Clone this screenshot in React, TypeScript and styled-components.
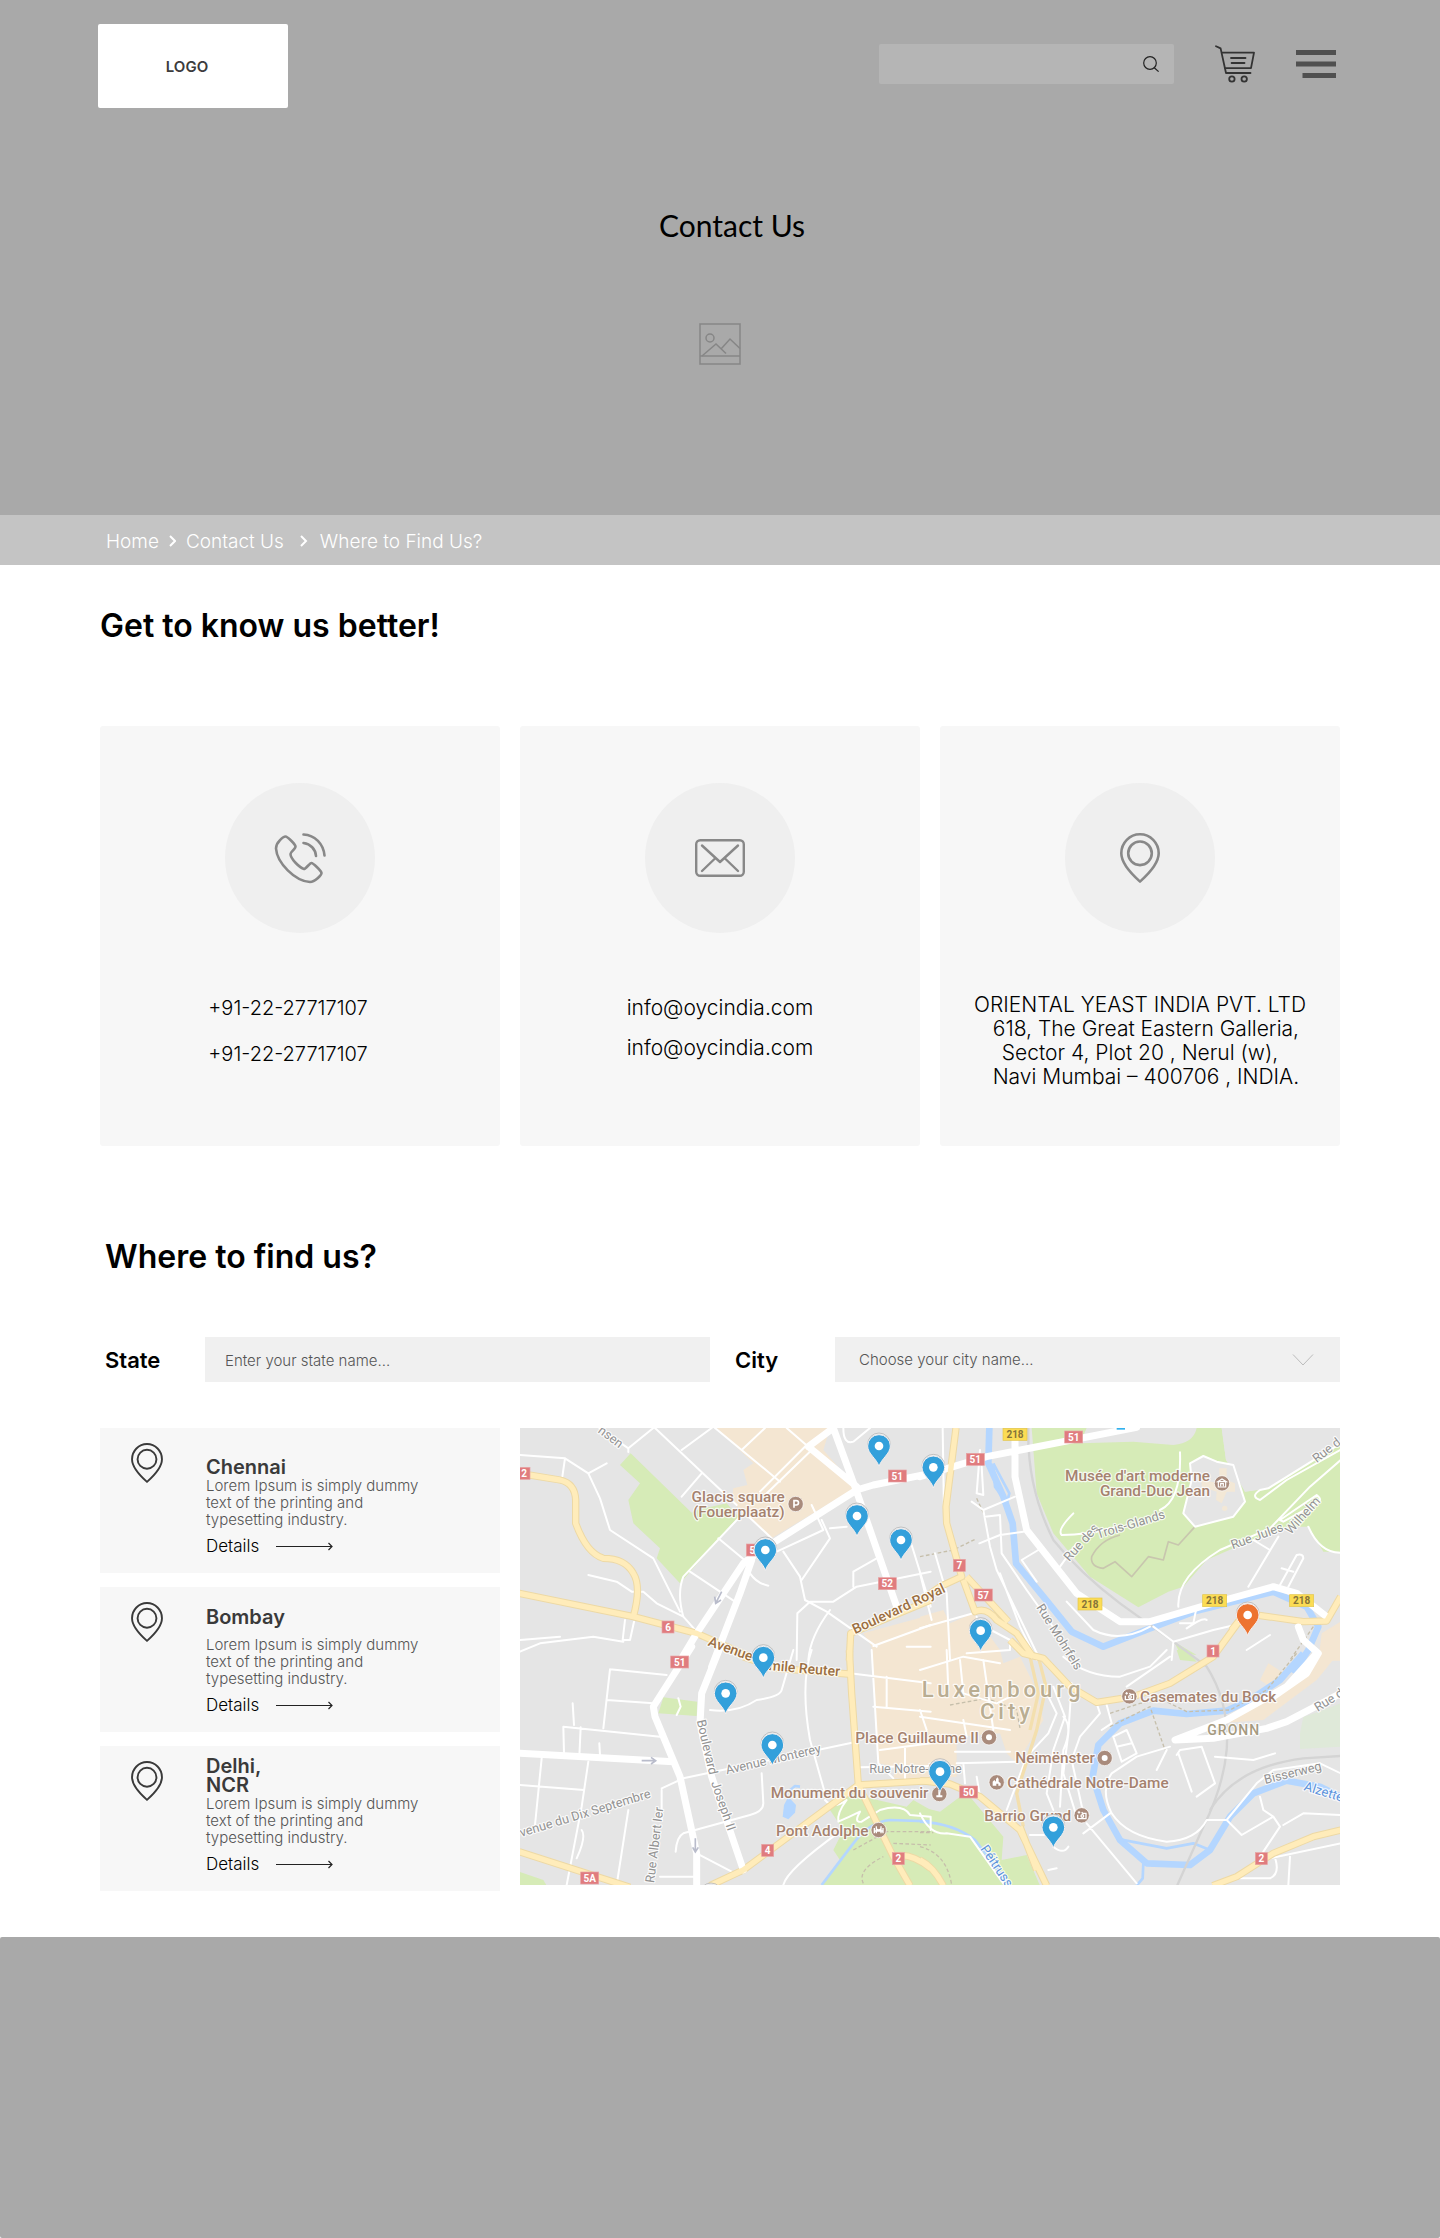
import React from "react";
import styled, { createGlobalStyle } from "styled-components";

const GlobalStyle = createGlobalStyle`
  *, *::before, *::after { box-sizing: border-box; }
  body {
    margin: 0;
    background: #fff;
    color: #000;
    font-family: Inter, "Liberation Sans", sans-serif;
  }
  h1, h2, h3, p { margin: 0; }
  button { border: 0; padding: 0; background: none; cursor: pointer; }
  a { color: inherit; text-decoration: none; }
  svg { display: block; }
`;

/* ---------- Hero ---------- */

const Hero = styled.header`
  background: #a9a9a9;
  padding: 24px 104px 150px 98px;
`;

const TopBar = styled.div`
  display: flex;
  justify-content: space-between;
  align-items: flex-start;
`;

const Logo = styled.a`
  display: flex;
  align-items: center;
  justify-content: center;
  width: 190px;
  height: 84px;
  padding-right: 12px;
  border-radius: 2px;
  background: #fff;
  color: #3c3c3c;
  font-size: 15px;
  font-weight: 600;
`;

const Tools = styled.div`
  display: flex;
  align-items: center;
  gap: 41px;
  height: 80px;
`;

const SearchBox = styled.form`
  display: flex;
  align-items: center;
  width: 295px;
  height: 40px;
  padding: 0 15px;
  border-radius: 2px;
  background: #b5b5b5;
`;

const SearchInput = styled.input`
  flex: 1;
  min-width: 0;
  border: 0;
  outline: 0;
  background: transparent;
  font: inherit;
`;

const HeroBody = styled.div`
  display: flex;
  flex-direction: column;
  align-items: center;
  gap: 80px;
  margin-top: 99px;
  padding-left: 6px;
`;

const PageTitle = styled.h1`
  padding-left: 24px;
  font-family: Lato, "Liberation Sans", sans-serif;
  font-size: 30px;
  font-weight: 400;
  line-height: 36px;
`;

const Breadcrumb = styled.nav`
  display: flex;
  align-items: center;
  gap: 10px;
  height: 50px;
  padding: 2px 106px 0;
  background: #c4c4c4;
  color: #fff;
  font-size: 19px;
  font-weight: 300;
`;

/* ---------- Contact ---------- */

const Main = styled.main`
  padding: 43px 100px 46px;
`;

const SectionTitle = styled.h2`
  font-size: 32px;
  font-weight: 600;
  line-height: 36px;
`;

const ContactGrid = styled.div`
  display: grid;
  grid-template-columns: repeat(3, 1fr);
  gap: 20px;
  margin: 82px 0 93px;
`;

const ContactCard = styled.article`
  display: flex;
  flex-direction: column;
  align-items: center;
  gap: 60px;
  min-height: 420px;
  padding: 57px 20px 40px;
  border-radius: 3px;
  background: #f7f7f7;
`;

const IconDisc = styled.div`
  display: flex;
  align-items: center;
  justify-content: center;
  width: 150px;
  height: 150px;
  border-radius: 50%;
  background: #efefef;
  color: #888;
`;

const ContactLines = styled.div<{ $gap: number; $size: number; $inset?: number }>`
  display: flex;
  flex-direction: column;
  align-items: center;
  gap: ${(p) => p.$gap}px;
  padding: 3px ${(p) => p.$inset ?? 0}px 0 0;
  font-size: ${(p) => p.$size}px;
  font-weight: 300;
  line-height: 24px;
`;

const Address = styled.address`
  font-size: 21px;
  font-style: normal;
  font-weight: 300;
  line-height: 24px;
  text-align: center;
  white-space: pre;
`;

/* ---------- Finder ---------- */

const FinderTop = styled.div`
  padding-left: 5px;
`;

const Filters = styled.form`
  display: grid;
  grid-template-columns: repeat(2, 1fr);
  gap: 25px;
  margin: 62px 0 46px;
`;

const Field = styled.div`
  display: flex;
  align-items: center;
`;

const FieldLabel = styled.label`
  flex: 0 0 100px;
  font-size: 22px;
  font-weight: 600;
`;

const StateInput = styled.input`
  flex: 1;
  min-width: 0;
  height: 45px;
  padding: 2px 20px 0;
  border: 0;
  border-radius: 0;
  background: #f0f0f0;
  color: #555;
  font-family: inherit;
  font-size: 15px;
  font-weight: 300;
  &::placeholder { color: #555; opacity: 1; }
`;

const SelectWrap = styled.div`
  position: relative;
  flex: 1;
  min-width: 0;
  svg {
    position: absolute;
    right: 26px;
    top: 17px;
    pointer-events: none;
  }
`;

const CitySelect = styled.select`
  appearance: none;
  width: 100%;
  height: 45px;
  padding: 0 24px;
  border: 0;
  border-radius: 0;
  background: #f0f0f0;
  color: #555;
  font-family: inherit;
  font-size: 15px;
  font-weight: 300;
`;

const FinderGrid = styled.div`
  display: grid;
  grid-template-columns: repeat(3, 1fr);
  align-items: start;
  gap: 20px;
`;

const LocationList = styled.div`
  display: grid;
  gap: 14px;
`;

const LocationCard = styled.article`
  display: grid;
  grid-template-columns: 75px 1fr;
  min-height: 145px;
  padding: 11px 20px 16px 31px;
  background: #f7f7f7;
`;

const PinSlot = styled.div`
  padding-top: 4px;
  color: #3a3a3a;
`;

const LocationName = styled.h3<{ $align: "center" | "end" }>`
  display: flex;
  align-items: ${(p) => p.$align};
  height: 38px;
  color: #3a3a3a;
  font-size: 20px;
  font-weight: 600;
  line-height: 19px;
  white-space: pre-line;
`;

const LocationText = styled.p`
  max-width: 230px;
  color: #555;
  font-size: 15px;
  font-weight: 300;
  line-height: 17px;
`;

const DetailsLink = styled.a`
  display: inline-flex;
  align-items: center;
  gap: 17px;
  margin-top: 8px;
  font-size: 17px;
  font-weight: 300;
  line-height: 20px;
`;

const MapFrame = styled.div`
  grid-column: span 2;
  svg { width: 100%; height: auto; }
`;

const Footer = styled.footer`
  height: 301px;
  border-radius: 2px;
  background: #a9a9a9;
`;

/* ---------- Icons ---------- */

const SearchIcon = () => (
  <svg width="16" height="16" viewBox="0 0 16 16" fill="none" stroke="#222" strokeWidth="1.2">
    <circle cx="7" cy="7" r="6.3" />
    <path d="M11 11.5 15.6 15.6" />
  </svg>
);

const CartIcon = () => (
  <svg width="40" height="38" viewBox="0 0 40 38" fill="none" stroke="#333" strokeWidth="1.8" strokeLinecap="round" strokeLinejoin="round">
    <path d="M1 1.2 5.6 3.4 11 28H35.500" />
    <path d="M7.400 7.600H39L36 23.200H10.500" />
    <path d="M16 13H30.500M16.600 18H29.500" />
    <circle cx="16.900" cy="34" r="2.700" />
    <circle cx="29.200" cy="34" r="2.700" />
  </svg>
);

const MenuIcon = () => (
  <svg width="40" height="28" viewBox="0 0 40 28" fill="#505050">
    <path d="M0 0H40V5H0ZM0 11.500H40V16.500H0ZM6.500 23H40V28H6.500Z" />
  </svg>
);

const PictureIcon = () => (
  <svg width="42" height="42" viewBox="0 0 42 42" fill="none" stroke="#868686" strokeWidth="1.500">
    <path d="M1 1H41V41H1ZM1 33H41" />
    <circle cx="11" cy="15" r="4" />
    <path d="M3 33 17 21 27 30.500M22 26 31 16 41 25.500" />
  </svg>
);

const CrumbArrow = ({ wide }: { wide?: boolean }) => (
  <svg width={wide ? 16 : 7} height="12" viewBox={wide ? "-6 0 16 12" : "0 0 7 12"} fill="none" stroke="#fff" strokeWidth="2" aria-hidden="true">
    <path d="M1 1 6 6 1 11" />
  </svg>
);

const PhoneIcon = () => (
  <svg width="52" height="52" viewBox="0 0 52 52" fill="none" stroke="currentColor" strokeWidth="2.600" strokeLinecap="round" strokeLinejoin="round">
    <path d="M11.500 4.500C9.500 4.500 2 10 2 16.500C3 31 21 49 36 50C41 50 47.500 43 47.500 41C47.500 39 39 31 37.500 31C35.500 31 32 37 30 37C26 36 16.500 27 16.500 22C16.500 20 21.500 17 21.500 14.500C21.500 12.500 13.500 4.500 11.500 4.500Z" />
    <path d="M29.500 11C36.500 12 41.500 17 42 24M29.500 2.500C41 3 49.500 12 50.500 23.500" />
  </svg>
);

const MailIcon = () => (
  <svg width="50" height="38" viewBox="0 0 50 38" fill="none" stroke="currentColor" strokeWidth="2.400" strokeLinecap="round" strokeLinejoin="round">
    <rect x="1.200" y="1.200" width="47.600" height="35.600" rx="4" />
    <path d="M7 6.500 25 23 43 6.500M7 32 20.500 19M43 32 29.500 19" />
  </svg>
);

const PinIcon = ({ width, height, stroke }: { width: number; height: number; stroke: number }) => (
  <svg width={width} height={height} viewBox="0 0 40 50" fill="none" stroke="currentColor" strokeWidth={stroke} strokeLinejoin="round">
    <path d="M20 48.600C12 41.500 1.300 31 1.300 20.300A18.700 19 0 0 1 38.700 20.300C38.700 31 28 41.500 20 48.600Z" />
    <circle cx="20" cy="20.300" r="11.800" />
  </svg>
);

const LongArrow = () => (
  <svg width="57" height="9" viewBox="0 0 57 9" fill="none" stroke="#222" strokeWidth="1.200" aria-hidden="true">
    <path d="M0 4.500H56M52.500 1 56 4.500 52.500 8" />
  </svg>
);

/* ---------- Map ---------- */

/* The map is drawn in four sheets; each sheet has its own origin. */
const SHEETS = {
  nw: "translate(-30 -24)",
  ne: "translate(1200 -24)",
  sw: "translate(-30 666)",
  se: "translate(1200 666)",
};
type Sheet = keyof typeof SHEETS;
type Shape = [Sheet, string];

const SAND: Shape[] = [
  ["nw", "M620 24H960L940 90 1010 170 1040 200 785 355 665 245 670 205 712 195 700 150 730 130Z"],
  ["nw", "M1060 640 1262 585V722H1085V680Z"],
  ["ne", "M0 590 70 570 90 610 160 580 240 690V720H0Z"],
  ["sw", "M1085 0H1262V390L1150 385 1155 350 1105 340Z"],
  ["se", "M0 0H240L250 40 300 20 345 110 370 210 290 340 260 310 240 250 110 260V380L0 390Z"],
  ["ne", "M1205 640 1262 605V722H1195Z"],
  ["se", "M1195 0H1262L1215 60 1190 90 1030 210 920 218 1100 120Z"],
  ["se", "M1045 40 1085 65 1050 110 1020 90Z"],
];

const PARKS: Shape[] = [
  ["nw", "M362 100 330 135 390 190 355 240 370 310 450 385 440 415 510 490 685 290 650 250 560 270 545 278Z"],
  ["ne", "M335 24H500L480 70 640 65 760 75Q820 70 830 24H905L918 120 975 215 1045 205 1262 70V395H1210L1165 320 1100 320 950 380 860 420 790 500 745 515 655 562 510 470 400 340 350 220Z"],
  ["sw", "M460 142 562 155 560 198 445 190Z"],
  ["sw", "M960 480 1010 440H1060L1190 470 1210 450 1262 480V707H935L990 630 970 600 1000 540Z"],
  ["se", "M0 470 60 485 120 440 150 440 250 560 245 630 320 615 360 707H0Z"],
  ["sw", "M28 665 100 690 110 707H28Z"],
  ["ne", "M762 665 830 705 780 700Z"],
  ["se", "M770 0H800L830 35 780 30Z"],
];

const PALE_PARKS: Shape[] = [["se", "M1150 200Q1190 190 1262 160V290L1140 297V250Z"]];

const BLOCKS: Shape[] = [
  ["ne", "M850 108 890 125 940 135 975 245 940 290 825 320 790 280 815 180 810 130Z"],
  ["ne", "M905 24H1262V70L1045 205 975 215 940 135 918 120Z"],
];

const RIVERS: Shape[] = [
  ["ne", "M208 24 205 130 250 230 278 310 288 430 370 530 455 635 550 680 690 625 830 572 1060 515 1160 560 1195 620 1165 690 1120 760"],
  ["se", "M1150 10 1080 90 990 150 920 182 800 192 700 182 600 220 535 285 518 380 550 480 600 570 680 640 810 645 870 600 930 500 1000 430 1100 392 1200 410 1262 440"],
];

const STREAMS: Shape[] = [
  ["ne", "M220 130 225 200 260 250 268 220 220 130"],
  ["sw", "M935 705 1030 580Q1080 515 1140 510L1262 514"],
  ["se", "M0 515Q100 520 165 570L270 707"],
  ["se", "M600 568 740 595 820 580 870 600M670 640 668 685 650 707"],
  ["sw", "M835 425 855 408 870 410"],
];

const PONDS: Shape[] = [["sw", "M835 440 858 465 855 488 835 508 818 500 822 465Z"]];

const MINOR_ROADS: Shape[] = [
  ["nw", "M30 105 165 115 235 160 270 235 300 330 430 415 510 575M165 115 157 170M235 160 290 130M268 24 355 85 430 24M355 85V96M435 24 600 180 680 255M515 90 605 24M575 160 515 230M695 90 765 24M615 24 810 185M695 270 785 355M625 355 710 425"],
  ["nw", "M685 295 520 470Q500 520 520 590L560 635M540 455 675 545M235 465 320 485 365 515H400L440 550 520 590M30 660 150 650M30 695 90 670 250 650 340 665M345 600 338 660H360L372 605"],
  ["nw", "M830 24 900 85M750 215 890 75M765 225 905 90M1000 24Q1000 75 1030 65L1080 24M800 395 940 330 905 255M935 300 960 355 875 480M820 395 870 470 885 540 950 575 1100 680M860 720 862 580 900 545 970 545 1040 500 1262 455M895 720Q900 650 960 570M1100 415 1030 455V500M1205 375 1262 560M720 460Q740 490 775 497M960 325 1010 320M1090 678 1262 615M1190 680H1262"],
  ["ne", "M68 24 72 280M180 90 170 220 190 225 185 140M155 245 190 270 285 230M195 290 240 285 245 400 320 510 470 720M190 270 210 380 230 450 360 720M240 460 300 620 350 720M178 370 240 345 310 335M355 390 305 420 350 485M0 460 35 600M45 400 80 520 90 720M0 625 160 580"],
  ["ne", "M420 440 470 370M460 280Q410 330 425 345 500 345 590 320M780 97Q785 240 720 270M850 108 890 125 940 135 975 245 940 290 825 320 790 280 815 180 810 130ZM1260 90 1100 180 1020 240Q990 230 1020 210L1045 205 1262 70M1262 120 1170 200 1050 325 900 390Q770 470 775 560M1165 320Q1200 400 1262 398M1080 300 1190 225Q1210 240 1190 250L1090 305ZM1075 350 985 500M1000 360 1050 390M1080 495 1130 405Q1150 400 1150 415L1105 500M1085 445 1120 455"],
  ["ne", "M440 545 520 630Q600 670 690 620M700 620 760 665 755 720M780 610 820 610 830 560M800 625Q850 590 860 600M760 665 880 630 1010 600M980 690 1050 645M170 590 175 610 270 660V690L140 700"],
  ["sw", "M300 58 470 75M300 58 280 235M290 150 430 160M188 160 192 225M160 230 450 260M160 230 162 310M212 232 208 320M268 280 270 315M95 325 75 525M235 335 215 470 170 705M30 405 222 420M355 480 320 705M215 540Q230 560 200 625M455 420 455 510M455 415 520 385 1040 275M600 180Q680 190 740 150 810 140 815 120L850 0M905 0Q870 100 900 270L945 430M755 370 760 460Q760 485 720 495L520 550Q500 560 497 605M560 610 675 670M820 705Q830 660 990 545M450 680H550M505 145 512 170 500 195M1020 70 1262 100M1085 0 1105 340 1150 385M1130 80V170M1090 170 1262 185M1110 300 1262 280M1185 290V390M1050 352 1262 348M1230 180 1250 240"],
  ["se", "M80 0 85 120M0 60 130 20 240 40M120 30 130 130 230 160 290 130M0 200 270 240M130 210 140 260M190 30 220 240M105 305H270M110 340 290 335M130 340 135 400M170 380 180 440M370 110 410 190 385 250 320 320 260 480M400 110 435 200 400 300 380 430 400 480M430 200Q460 230 430 300L420 470M455 100 445 250 430 370 470 500M530 160 540 190 480 260 455 330 490 490"],
  ["se", "M430 20Q500 80 600 80L690 50 740 0M620 110 750 20M560 165 575 220 545 240M750 290 650 320 575 370Q540 420 575 490 620 560 740 575 830 570 860 510L920 510 1010 400 1060 360 1200 340 1262 370M490 550 570 490M500 520 650 700M580 260 620 240 650 310 605 335ZM590 290 635 280M770 315 780 300 845 290 885 400 830 440M775 310 815 425M740 300 710 360M885 320 1000 330 1065 310M920 510 965 555 1060 500 1030 480 1020 440M1060 500 1080 530 1030 605M1090 525 1150 490 1262 495M1060 610Q1085 670 1050 685H960M1050 625 1262 580M1110 620 1105 705M330 555H380M400 590Q430 615 445 590M385 660 410 655M0 490Q30 555 80 550L150 560 250 700"],
  ["sw", "M945 450Q970 480 1010 450 980 490 985 515 1020 500 1050 485 1030 520 1055 515L1110 480Q1180 460 1200 495L1262 500V540"],
];

const YELLOW_ROADS: Shape[] = [
  ["nw", "M28 160 150 180Q195 190 197 240V310Q230 400 280 415 345 415 370 460 395 500 370 590M28 520 370 590 560 640 730 715M1018 722 1022 640 1262 540"],
  ["sw", "M700 20 800 55 1015 72M1018 0 1025 130 1045 405 1262 392M600 707 700 660 1045 405 1150 620 1200 707M1150 620Q1200 605 1262 655M28 605 360 712"],
  ["se", "M0 392 90 402 180 440 300 540 380 707M300 530 350 660M0 630Q40 650 70 707M270 -30 310 10 370 25 450 110 530 157 640 140 750 100 880 20 960 -90M878 707 950 680 1060 610 1180 560 1262 540"],
  ["ne", "M108 24 78 260 80 310 125 470 60 500 0 542M130 480 165 575Q200 560 230 600L290 640 340 712M140 470 265 605M935 630 975 580 1150 605 1220 603 1262 530"],
];

const NARROW_YELLOW: Shape[] = [["se", "M355 20 378 110 350 240 290 430 310 530M330 20 355 130 330 240"]];

const MAIN_ROADS: Shape[] = [
  ["nw", "M500 740 560 640 700 430 740 400 1040 210 1090 195 1262 160M605 740 690 520 725 420M970 24 1040 215 1160 560M895 80 1040 200M895 80 970 24"],
  ["ne", "M0 170 200 110 650 22M285 60V170L320 330 470 520 600 605H690L860 555 1060 500 1130 520 1220 590"],
  ["sw", "M545 -10 430 170 435 200 510 380 560 610V707M635 -20 575 130 570 220 605 380 700 660M28 310 490 335"],
  ["ne", "M1135 620 1150 660 1195 700 1160 760 1060 830"],
  ["se", "M1190 10 1100 110 920 210 765 270 880 265 1040 235 1100 215 1262 130"],
];

const RAILS: Shape[] = [
  ["ne", "M325 24Q320 200 400 360 480 460 600 550L760 665 860 740Q930 850 920 990 910 1100 850 1220L770 1400"],
  ["se", "M870 480Q950 350 1150 325L1262 318"],
];

const TRAILS: Shape[] = [
  ["ne", "M0 410 100 390 165 358M170 235 200 300M1180 620 1110 720"],
  ["se", "M570 190 660 160 730 150 800 185 930 180 1040 120 1130 10M570 230 690 170 735 300M90 165 200 145 290 180 300 235M0 548H40M0 590Q80 610 95 705"],
  ["sw", "M1030 600 1130 545H1262M1060 700Q1040 660 1120 620M1150 580 1262 585"],
];

const FOOTPATHS: Shape[] = [
  ["ne", "M825 320 775 375 745 365 730 420 685 410 635 470 585 425 550 445Q510 440 515 410 540 360 600 345"],
];

const Layer = ({ shapes, ...paint }: { shapes: Shape[] } & React.SVGProps<SVGGElement>) => (
  <g {...paint}>
    {shapes.map(([sheet, d], i) => (
      <path key={i} transform={SHEETS[sheet]} d={d} />
    ))}
  </g>
);

type LabelKind = "place" | "road" | "avenue" | "city" | "district" | "water";
const MapText = styled.text<{ $kind: LabelKind }>`
  font-family: Roboto, "Liberation Sans", sans-serif;
  font-size: ${(p) => ({ place: 46, road: 38, avenue: 42, city: 66, district: 42, water: 39 })[p.$kind]}px;
  fill: ${(p) =>
    ({ place: "#a5826f", road: "#929292", avenue: "#9b6f42", city: "#b9ad92", district: "#a59a80", water: "#5c93dc" })[p.$kind]};
  letter-spacing: ${(p) => ({ place: 0, road: 0, avenue: 0, city: 12, district: 3, water: 0 })[p.$kind]}px;
  font-weight: ${(p) => (p.$kind === "road" || p.$kind === "water" ? 400 : 500)};
  stroke: #fff;
  stroke-opacity: 0.8;
  stroke-width: 7px;
  stroke-linejoin: round;
  paint-order: stroke;
`;

interface Label {
  at: [Sheet, number, number];
  text: string;
  kind: LabelKind;
  turn?: number;
  anchor?: "start" | "middle" | "end";
}

const LABELS: Label[] = [
  { at: ["nw", 824, 245], text: "Glacis square", kind: "place", anchor: "end" },
  { at: ["nw", 824, 291], text: "(Fouerplaatz)", kind: "place", anchor: "end" },
  { at: ["ne", 870, 182], text: "Musée d'art moderne", kind: "place", anchor: "end" },
  { at: ["ne", 870, 229], text: "Grand-Duc Jean", kind: "place", anchor: "end" },
  { at: ["sw", 1036, 280], text: "Place Guillaume II", kind: "place" },
  { at: ["sw", 782, 445], text: "Monument du souvenir", kind: "place" },
  { at: ["sw", 798, 557], text: "Pont Adolphe", kind: "place" },
  { at: ["se", 660, 156], text: "Casemates du Bock", kind: "place" },
  { at: ["se", 286, 340], text: "Neimënster", kind: "place" },
  { at: ["se", 262, 415], text: "Cathédrale Notre-Dame", kind: "place" },
  { at: ["se", 193, 514], text: "Barrio Grund", kind: "place" },
  { at: ["se", 5, 140], text: "Luxembourg", kind: "city" },
  { at: ["se", 180, 208], text: "City", kind: "city" },
  { at: ["se", 862, 254], text: "GRONN", kind: "district" },
  { at: ["nw", 1035, 643], text: "Boulevard Royal", kind: "avenue", turn: -25 },
  { at: ["nw", 592, 676], text: "Avenue", kind: "avenue", turn: 20 },
  { at: ["sw", 775, 60], text: "mile Reuter", kind: "avenue", turn: 5 },
  { at: ["nw", 262, 36], text: "nsen", kind: "road", turn: 37 },
  { at: ["ne", 448, 426], text: "Rue des", kind: "road", turn: -48 },
  { at: ["ne", 534, 356], text: "Trois-Glands", kind: "road", turn: -17 },
  { at: ["ne", 938, 388], text: "Rue Jules", kind: "road", turn: -20 },
  { at: ["ne", 1112, 345], text: "Wilhelm", kind: "road", turn: -48 },
  { at: ["ne", 1190, 130], text: "Rue d", kind: "road", turn: -38 },
  { at: ["ne", 348, 562], text: "Rue Mohrfels", kind: "road", turn: 58 },
  { at: ["se", 1193, 186], text: "Rue d", kind: "road", turn: -32 },
  { at: ["se", 1036, 402], text: "Bisserweg", kind: "road", turn: -14 },
  { at: ["se", 1150, 420], text: "Alzette", kind: "water", turn: 17 },
  { at: ["se", 180, 596], text: "Péitruss", kind: "water", turn: 56 },
  { at: ["sw", 560, 212], text: "Boulevard", kind: "road", turn: 77 },
  { at: ["sw", 603, 398], text: "Joseph II", kind: "road", turn: 71 },
  { at: ["sw", 650, 373], text: "Avenue Monterey", kind: "road", turn: -13 },
  { at: ["sw", 1078, 368], text: "Rue Notre-Dame", kind: "road" },
  { at: ["sw", 34, 561], text: "venue du Dix Septembre", kind: "road", turn: -17 },
  { at: ["sw", 432, 700], text: "Rue Albert Ier", kind: "road", turn: -83 },
];

interface Shield {
  at: [Sheet, number, number];
  text: string;
  tone?: "yellow";
}

const SHIELDS: Shield[] = [
  { at: ["nw", 42, 160], text: "2" },
  { at: ["nw", 1162, 168], text: "51" },
  { at: ["nw", 736, 390], text: "51" },
  { at: ["nw", 1132, 491], text: "52" },
  { at: ["nw", 474, 621], text: "6" },
  { at: ["sw", 509, 36], text: "51" },
  { at: ["ne", 166, 118], text: "51" },
  { at: ["ne", 461, 51], text: "51" },
  { at: ["ne", 285, 43], text: "218", tone: "yellow" },
  { at: ["ne", 510, 552], text: "218", tone: "yellow" },
  { at: ["ne", 884, 542], text: "218", tone: "yellow" },
  { at: ["ne", 1145, 542], text: "218", tone: "yellow" },
  { at: ["ne", 118, 436], text: "7" },
  { at: ["ne", 190, 525], text: "57" },
  { at: ["ne", 879, 693], text: "1" },
  { at: ["se", 146, 426], text: "50" },
  { at: ["se", 1024, 626], text: "2" },
  { at: ["sw", 773, 601], text: "4" },
  { at: ["sw", 1165, 626], text: "2" },
  { at: ["sw", 239, 684], text: "5A" },
];

const ShieldText = styled.text<{ $yellow: boolean }>`
  font-family: Roboto, "Liberation Sans", sans-serif;
  font-size: 30px;
  font-weight: 700;
  text-anchor: middle;
  fill: ${(p) => (p.$yellow ? "#85743a" : "#fff")};
`;

type PoiGlyph = "dot" | "parking" | "camera" | "museum" | "church" | "monument" | "bridge";
const POIS: [Sheet, number, number, PoiGlyph][] = [
  ["nw", 857, 252, "parking"],
  ["ne", 906, 190, "museum"],
  ["se", 207, 262, "dot"],
  ["se", 554, 324, "dot"],
  ["se", 628, 139, "camera"],
  ["se", 485, 496, "camera"],
  ["se", 230, 397, "church"],
  ["se", 58, 432, "monument"],
  ["sw", 1106, 540, "bridge"],
];

const Poi = ({ glyph }: { glyph: PoiGlyph }) => (
  <g>
    <circle r="23" fill="#a98b7c" stroke="#fff" strokeOpacity=".7" strokeWidth="3" />
    {glyph === "dot" && <circle r="9" fill="#fff" />}
    {glyph === "parking" && <path d="M-5 11V-10H2A6 6 0 0 1 2 3H-5" fill="none" stroke="#fff" strokeWidth="5" />}
    {glyph === "camera" && (
      <g fill="none" stroke="#fff" strokeWidth="4">
        <path d="M-12 -2V10H13V-6H3L0 -9" />
        <circle cx="2" cy="2" r="4" />
        <path d="M-12 -9H-4M-8 -13V-5" strokeWidth="3" />
      </g>
    )}
    {glyph === "museum" && <path d="M-13 -5 0 -13 13 -5ZM-11 -3V11H11V-3M-4 9V1H4V9" fill="none" stroke="#fff" strokeWidth="3.500" />}
    {glyph === "church" && <path d="M-12 10V-2L-7 -7-2 -2V-10L3 -15 6 -9V-2L12 3V10H5V4H-1V10Z" fill="#fff" />}
    {glyph === "monument" && <path d="M-3 -12H3V4H9V10H-9V4H-3Z" fill="#fff" />}
    {glyph === "bridge" && <path d="M-13 -6V10M13 -6V10M-7 -11V10M7 -11V10M-13 3H13M-7 -4Q0 4 7 -4" fill="none" stroke="#fff" strokeWidth="4" />}
  </g>
);

const MARKERS: [Sheet, number, number, string][] = [
  ["nw", 1107, 138, "#33a0db"],
  ["nw", 1041, 348, "#33a0db"],
  ["nw", 1173, 420, "#33a0db"],
  ["nw", 766, 450, "#33a0db"],
  ["sw", 760, 83, "#33a0db"],
  ["sw", 647, 190, "#33a0db"],
  ["sw", 787, 345, "#33a0db"],
  ["sw", 603, 798, "#33a0db"],
  ["ne", 40, 202, "#33a0db"],
  ["ne", 182, 692, "#33a0db"],
  ["ne", 983, 645, "#ed7330"],
  ["se", 60, 425, "#33a0db"],
  ["se", 400, 592, "#33a0db"],
];

const Marker = ({ color }: { color: string }) => (
  <g>
    <circle cy="-65" r="34" fill="#eee" stroke="#aaa" strokeWidth="2" />
    <path d="M0 2C-6 -22 -34 -36 -34 -60A34 34 0 0 1 34 -60C34 -36 6 -22 0 2Z" fill={color} stroke="#f4eeee" strokeWidth="3" />
    <circle cy="-60" r="13" fill="#fff" />
  </g>
);

const StoreMap = () => (
  <svg viewBox="0 0 2460 1371" role="img" aria-label="Map of Luxembourg City">
    <rect width="2460" height="1371" fill="#e5e5e5" />
    <Layer shapes={SAND} fill="#f4e6d2" />
    <Layer shapes={PARKS} fill="#d6ebb7" />
    <Layer shapes={PALE_PARKS} fill="#dfe9d9" />
    <Layer shapes={BLOCKS} fill="#e5e5e5" />
    <g fill="#f3e8d6" transform={SHEETS.ne}>
      <path d="M898 145H920V180L945 190V215H920L905 250 888 240 890 215 845 200V180L898 190Z" />
      <circle cx="914" cy="265" r="8" />
    </g>
    <Layer shapes={RIVERS} fill="none" stroke="#b4d6ff" strokeWidth="20" strokeLinejoin="round" />
    <Layer shapes={STREAMS} fill="none" stroke="#b4d6ff" strokeWidth="8" strokeLinejoin="round" />
    <Layer shapes={PONDS} fill="#b4d6ff" />
    <Layer shapes={RAILS} fill="none" stroke="#d4d4d4" strokeWidth="7" />
    <Layer shapes={TRAILS} fill="none" stroke="#c6bfab" strokeWidth="4" strokeDasharray="11 7" />
    <Layer shapes={FOOTPATHS} fill="none" stroke="#c8c6ae" strokeWidth="5" strokeLinejoin="round" />
    <Layer shapes={MINOR_ROADS} fill="none" stroke="#fff" strokeWidth="6" strokeLinejoin="round" strokeLinecap="round" />
    <Layer shapes={NARROW_YELLOW} fill="none" stroke="#f3dfae" strokeWidth="10" />
    <Layer shapes={YELLOW_ROADS} fill="none" stroke="#edd9a5" strokeWidth="22" strokeLinejoin="round" />
    <Layer shapes={MAIN_ROADS} fill="none" stroke="#fff" strokeWidth="21" strokeLinejoin="round" strokeLinecap="round" />
    <Layer shapes={YELLOW_ROADS} fill="none" stroke="#ffecba" strokeWidth="16" strokeLinejoin="round" />
    <path transform={SHEETS.ne} d="M590 24H615V29H590Z" fill="#33b1ee" />
    <g fill="none" stroke="#b9bccb" strokeWidth="5">
      <path transform={SHEETS.nw} d="M635 515 618 548M614 530 617 550 633 540" />
      <path transform={SHEETS.sw} d="M395 332H435M423 322 437 332 423 342M556 565V605M548 592 556 606 565 592" />
    </g>
    {LABELS.map(({ at: [sheet, x, y], text, kind, turn = 0, anchor }) => (
      <g key={text + x} transform={SHEETS[sheet]}>
        <MapText $kind={kind} textAnchor={anchor} transform={`translate(${x} ${y}) rotate(${turn})`}>
          {text}
        </MapText>
      </g>
    ))}
    {POIS.map(([sheet, x, y, glyph]) => (
      <g key={`${sheet}${x}`} transform={`${SHEETS[sheet]} translate(${x} ${y})`}>
        <Poi glyph={glyph} />
      </g>
    ))}
    {SHIELDS.map(({ at: [sheet, x, y], text, tone }) => {
      const w = 18 + text.length * 18;
      return (
        <g key={`${sheet}${x}`} transform={`${SHEETS[sheet]} translate(${x} ${y})`}>
          <rect
            x={-w / 2}
            y="-18"
            width={w}
            height="36"
            fill={tone ? "#fbdc54" : "#e07c7e"}
            stroke={tone ? "#e3c64c" : "#e8a3a4"}
            strokeWidth="2"
          />
          <ShieldText $yellow={!!tone} y="11">
            {text}
          </ShieldText>
        </g>
      );
    })}
    {MARKERS.map(([sheet, x, y, color]) => (
      <g key={`${sheet}${x}`} transform={`${SHEETS[sheet]} translate(${x} ${y})`}>
        <Marker color={color} />
      </g>
    ))}
  </svg>
);

/* ---------- Page ---------- */

const LOCATIONS: { name: string; align: "center" | "end" }[] = [
  { name: "Chennai", align: "end" },
  { name: "Bombay", align: "center" },
  { name: "Delhi,\nNCR", align: "center" },
];

export default function App() {
  return (
    <>
      <GlobalStyle />
      <Hero>
        <TopBar>
          <Logo href="#">LOGO</Logo>
          <Tools>
            <SearchBox role="search">
              <SearchInput type="search" aria-label="Search" />
              <button type="submit" aria-label="Submit search">
                <SearchIcon />
              </button>
            </SearchBox>
            <button type="button" aria-label="Cart">
              <CartIcon />
            </button>
            <button type="button" aria-label="Menu">
              <MenuIcon />
            </button>
          </Tools>
        </TopBar>
        <HeroBody>
          <PageTitle>Contact Us</PageTitle>
          <PictureIcon />
        </HeroBody>
      </Hero>
      <Breadcrumb aria-label="Breadcrumb">
        <a href="#">Home</a>
        <CrumbArrow />
        <a href="#">Contact Us</a>
        <CrumbArrow wide />
        <a href="#">Where to Find Us?</a>
      </Breadcrumb>

      <Main>
        <SectionTitle>Get to know us better!</SectionTitle>
        <ContactGrid>
          <ContactCard>
            <IconDisc>
              <PhoneIcon />
            </IconDisc>
            <ContactLines $gap={22} $size={20} $inset={24}>
              <a href="tel:+912227717107">+91-22-27717107</a>
              <a href="tel:+912227717107">+91-22-27717107</a>
            </ContactLines>
          </ContactCard>
          <ContactCard>
            <IconDisc>
              <MailIcon />
            </IconDisc>
            <ContactLines $gap={16} $size={21}>
              <a href="mailto:info@oycindia.com">info@oycindia.com</a>
              <a href="mailto:info@oycindia.com">info@oycindia.com</a>
            </ContactLines>
          </ContactCard>
          <ContactCard>
            <IconDisc>
              <PinIcon width={40} height={50} stroke={2.6} />
            </IconDisc>
            <Address>
              {"ORIENTAL YEAST INDIA PVT. LTD\n  618, The Great Eastern Galleria,\nSector 4, Plot 20 , Nerul (w),\n  Navi Mumbai – 400706 , INDIA."}
            </Address>
          </ContactCard>
        </ContactGrid>

        <FinderTop>
          <SectionTitle>Where to find us?</SectionTitle>
          <Filters>
            <Field>
              <FieldLabel htmlFor="state">State</FieldLabel>
              <StateInput id="state" type="text" placeholder="Enter your state name..." />
            </Field>
            <Field>
              <FieldLabel htmlFor="city">City</FieldLabel>
              <SelectWrap>
                <CitySelect id="city" defaultValue="">
                  <option value="">Choose your city name...</option>
                  <option>Chennai</option>
                  <option>Bombay</option>
                  <option>Delhi, NCR</option>
                </CitySelect>
                <svg width="22" height="12" viewBox="0 0 22 12" fill="none" stroke="#bbb" aria-hidden="true">
                  <path d="M1 .500 11 11 21 .500" />
                </svg>
              </SelectWrap>
            </Field>
          </Filters>
        </FinderTop>

        <FinderGrid>
          <LocationList>
            {LOCATIONS.map(({ name, align }) => (
              <LocationCard key={name}>
                <PinSlot>
                  <PinIcon width={32} height={40} stroke={2.4} />
                </PinSlot>
                <div>
                  <LocationName $align={align}>{name}</LocationName>
                  <LocationText>Lorem Ipsum is simply dummy text of the printing and typesetting industry.</LocationText>
                  <DetailsLink href="#">
                    Details
                    <LongArrow />
                  </DetailsLink>
                </div>
              </LocationCard>
            ))}
          </LocationList>
          <MapFrame>
            <StoreMap />
          </MapFrame>
        </FinderGrid>
      </Main>
      <Footer />
    </>
  );
}
